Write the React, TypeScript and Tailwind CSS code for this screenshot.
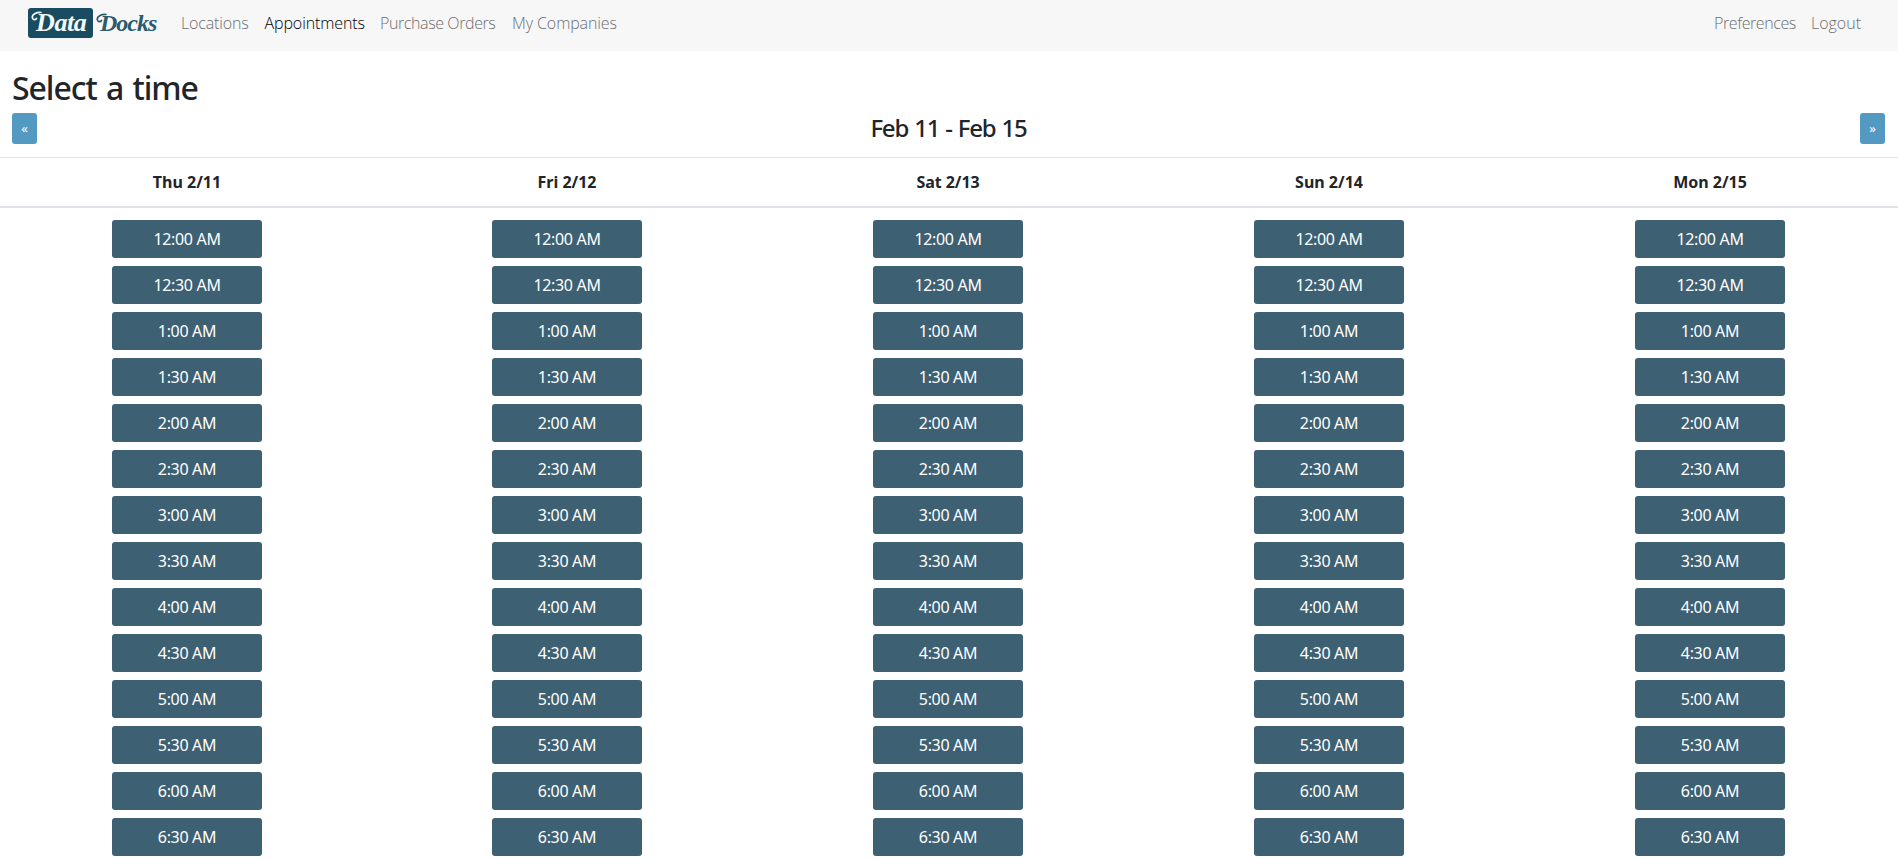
const days = [
  { label: "Thu 2/11", spacing: "tracking-[0px]" },
  { label: "Fri 2/12", spacing: "tracking-[0px]" },
  { label: "Sat 2/13", spacing: "tracking-[-0.05px]" },
  { label: "Sun 2/14", spacing: "tracking-[0px]" },
  { label: "Mon 2/15", spacing: "tracking-[0px]" },
];

const times = [
  "12:00 AM", "12:30 AM", "1:00 AM", "1:30 AM", "2:00 AM", "2:30 AM", "3:00 AM",
  "3:30 AM", "4:00 AM", "4:30 AM", "5:00 AM", "5:30 AM", "6:00 AM", "6:30 AM",
];

function Swash({ className }: { className: string }) {
  return (
    <svg className={className} width="12" height="11" viewBox="0 0 12 11" fill="none" stroke="currentColor" strokeWidth="1.700" strokeLinecap="round">
      <path d="M10 1.500C5 1.200 1 3.500 1.300 6.500c.3 2.600 3 2.800 4.200 1" />
    </svg>
  );
}

function Logo() {
  return (
    <span className="flex h-[34px] items-center font-['Liberation_Serif',serif] text-[26px] leading-[30px] font-bold italic">
      <span className="relative h-[30px] w-[65px] rounded-[3px] bg-[#194c60] pl-[8px] tracking-[-0.4px] text-[#f4fbfd]">
        Data
        <Swash className="absolute top-[3px] left-[3px]" />
      </span>
      <span className="relative h-[30px] w-[67px] pl-[7px] text-[24px] tracking-[-1px] text-[#2a5b6e]">
        Docks
        <Swash className="absolute top-[5px] left-[3px]" />
      </span>
    </span>
  );
}

function Navbar() {
  return (
    <nav className="flex h-[51px] items-center bg-[#f7f7f8] pr-9 pb-[5px] pl-7 font-['Open_Sans',sans-serif] text-base leading-6 font-light text-[#6c6e70]">
      <a className="mr-[21px] block w-[132px]" href="#">
        <Logo />
      </a>
      <a className="w-[83.500px] tracking-[-0.15px]" href="#">Locations</a>
      <a className="w-[115.500px] tracking-[-0.1px] text-black" href="#">Appointments</a>
      <a className="w-[132px] tracking-[-0.4px]" href="#">Purchase Orders</a>
      <a className="tracking-[-0.1px]" href="#">My Companies</a>
      <a className="mr-[15px] ml-auto tracking-[-0.4px]" href="#">Preferences</a>
      <a className="mr-px" href="#">Logout</a>
    </nav>
  );
}

function ArrowButton({ children }: { children: string }) {
  return (
    <button className="flex h-[31px] w-[25px] items-center justify-center rounded-[3px] bg-[#5499c2] pt-px text-[13px] text-white">
      {children}
    </button>
  );
}

export default function App() {
  return (
    <div className="h-[860px] overflow-hidden bg-white font-['Noto_Sans',sans-serif] text-[#212529]">
      <Navbar />
      <main>
        <h1 className="mt-[18px] ml-3 h-11 text-[32px] leading-[38px] font-medium tracking-[-1.050px] [word-spacing:2px]">
          Select a time
        </h1>
        <div className="flex h-11 items-start justify-between pr-[13px] pl-3">
          <ArrowButton>«</ArrowButton>
          <h2 className="text-2xl leading-[29px] font-medium tracking-[-1.200px] [word-spacing:1px]">Feb 11 - Feb 15</h2>
          <ArrowButton>»</ArrowButton>
        </div>
        <div className="-mx-[3px] border-t border-[#dee2e6]">
          <div className="grid h-[50px] grid-cols-[380px_380px_382px_380px_382px] border-b-2 border-[#dee2e6] pt-3 text-center leading-6 font-bold">
            {days.map((d) => (
              <div key={d.label} className={d.spacing}>{d.label}</div>
            ))}
          </div>
          <div className="grid grid-cols-[380px_380px_382px_380px_382px] pt-3">
            {days.map((d) => (
              <div key={d.label} className="flex flex-col items-center gap-2">
                {times.map((t) => (
                  <button key={t} className="h-[38px] w-[150px] rounded-[3px] bg-[#3e6073] text-base leading-6 tracking-[-0.32px] text-white">
                    {t}
                  </button>
                ))}
              </div>
            ))}
          </div>
        </div>
      </main>
    </div>
  );
}
